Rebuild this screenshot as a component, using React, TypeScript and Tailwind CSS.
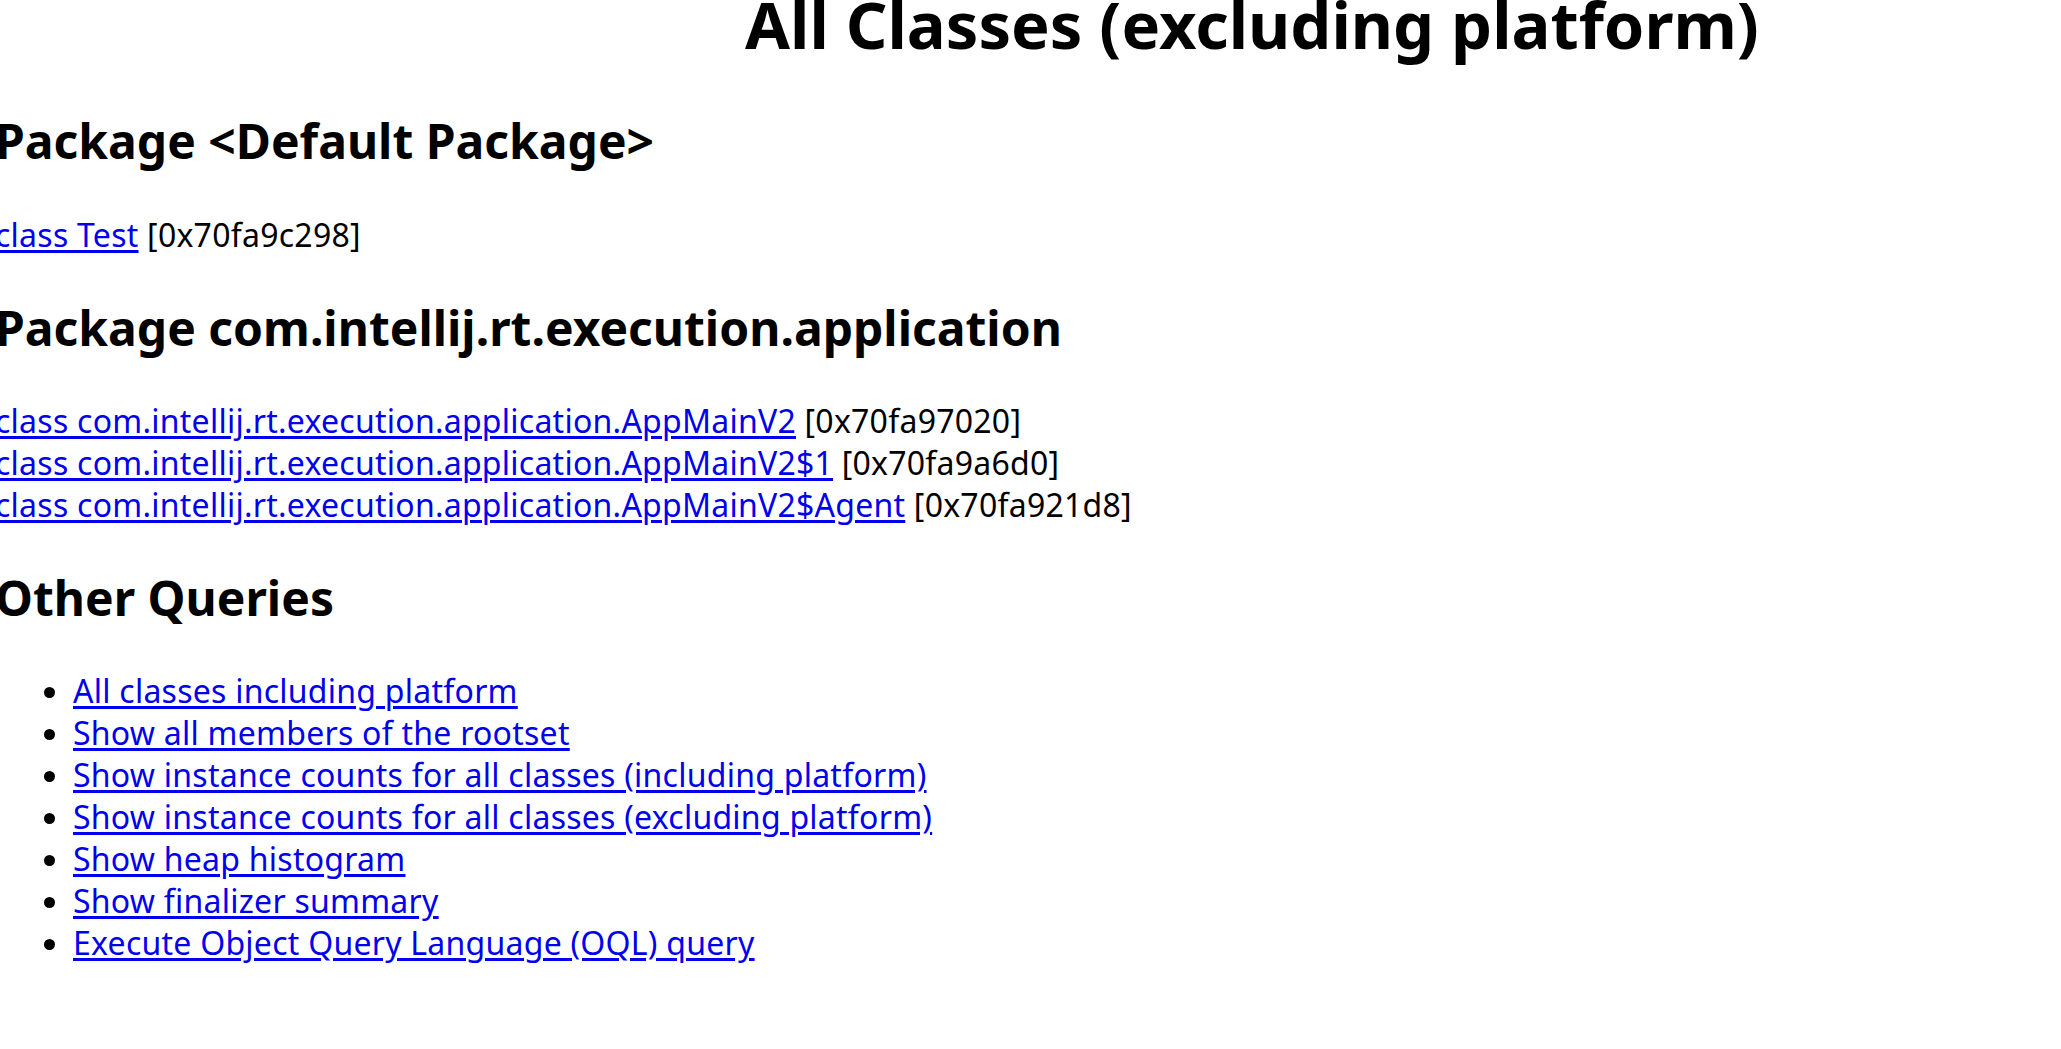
const classRows = [
  { name: "class com.intellij.rt.execution.application.AppMainV2", addr: "[0x70fa97020]" },
  { name: "class com.intellij.rt.execution.application.AppMainV2$1", addr: "[0x70fa9a6d0]" },
  { name: "class com.intellij.rt.execution.application.AppMainV2$Agent", addr: "[0x70fa921d8]" },
];

const queries = [
  "All classes including platform",
  "Show all members of the rootset",
  "Show instance counts for all classes (including platform)",
  "Show instance counts for all classes (excluding platform)",
  "Show heap histogram",
  "Show finalizer summary",
  "Execute Object Query Language (OQL) query",
];

function Link({ children }: { children: React.ReactNode }) {
  return (
    <a href="#" className="text-[#0000ee] underline decoration-[3px] underline-offset-[3px]">
      {children}
    </a>
  );
}

function Heading({ children }: { children: React.ReactNode }) {
  return (
    <h2 className="text-[48px] leading-[58px] font-bold tracking-normal whitespace-nowrap">
      {children}
    </h2>
  );
}

export default function App() {
  return (
    <div className="w-screen h-screen overflow-hidden bg-white text-black">
      <div
        className="w-[2514px] -ml-[5px] -mt-[14px] flex flex-col text-[32px] leading-[42px] tracking-[0.25px]"
        style={{ fontFamily: "'Noto Sans', sans-serif" }}
      >
        <h1 className="text-[65px] leading-[76px] font-bold tracking-normal text-center whitespace-nowrap">
          All Classes (excluding platform)
        </h1>

        <div className="mt-[50px]">
          <Heading>Package &lt;Default Package&gt;</Heading>
        </div>
        <div className="mt-[44px] whitespace-nowrap">
          <Link>class Test</Link> [0x70fa9c298]
        </div>

        <div className="mt-[43px]">
          <Heading>Package com.intellij.rt.execution.application</Heading>
        </div>
        <div className="mt-[43px] flex flex-col whitespace-nowrap">
          {classRows.map((r) => (
            <div key={r.name}>
              <Link>{r.name}</Link> {r.addr}
            </div>
          ))}
        </div>

        <div className="mt-[43px]">
          <Heading>Other Queries</Heading>
        </div>
        <ul className="mt-[43px] list-disc pl-[78px] whitespace-nowrap">
          {queries.map((q) => (
            <li key={q}>
              <Link>{q}</Link>
            </li>
          ))}
        </ul>
      </div>
    </div>
  );
}
